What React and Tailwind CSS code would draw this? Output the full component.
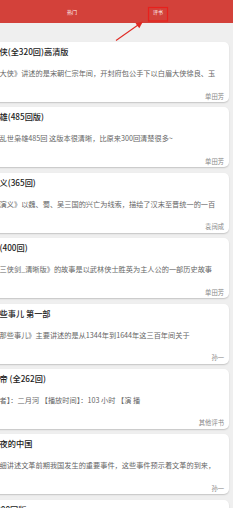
import React from "react";

const cards = [
  { title: "白眉大侠(全320回)高清版", desc: "《白眉大侠》讲述的是宋朝仁宗年间，开封府包公手下以白眉大侠徐良、玉", author: "单田芳" },
  { title: "乱世枭雄(485回版)", desc: "单田芳乱世枭雄485回 这版本很清晰，比原来300回清楚很多~", author: "单田芳" },
  { title: "三国演义(365回)", desc: "《三国演义》以魏、蜀、吴三国的兴亡为线索，描绘了汉末至晋统一的一百", author: "袁阔成" },
  { title: "三侠剑(400回)", desc: "评书《三侠剑_清晰版》的故事是以武林侠士胜英为主人公的一部历史故事", author: "单田芳" },
  { title: "明朝那些事儿 第一部", desc: "《明朝那些事儿》主要讲述的是从1344年到1644年这三百年间关于", author: "孙一" },
  { title: "雍正皇帝 (全262回)", desc: "【原作者】：二月河 【播放时间】：103  小时 【演 播", author: "其他评书" },
  { title: "文革前夜的中国", desc: "本书详细讲述文革前期我国发生的重要事件，这些事件预示着文革的到来，", author: "孙一" },
  { title: "隋唐1000回版", desc: "《隋唐演义》讲述的是隋末唐初的英雄故事", author: "单田芳" },
];

export default function App() {
  return (
    <div
      className="relative w-[245px] h-[508px] overflow-hidden bg-white"
      style={{ fontFamily: '"Noto Sans CJK SC", "Noto Sans", sans-serif' }}
    >
      <div className="w-[233px] h-full bg-[#efefef] overflow-hidden">
        <div className="h-[23px] bg-[#d3413a] flex items-center text-white text-[5px] leading-none">
          <span className="ml-[67px]">热门</span>
          <span className="ml-[76px]">评书</span>
        </div>
        <div className="pt-[19px] ml-[-28px] w-[257px] flex flex-col gap-[5.4px]">
          {cards.map((c, i) => (
            <div
              key={i}
              className="h-[60px] shrink-0 bg-white rounded-[5px] shadow-[0_1px_1.5px_rgba(0,0,0,0.18)] pl-[6px] pr-[5px] pt-[4px] flex flex-col"
            >
              <div className="ml-[-3px] text-[8.2px] leading-[11px] font-medium text-[#222] whitespace-nowrap overflow-hidden">
                {c.title}
              </div>
              <div className="mt-[11px] text-[7.2px] leading-[10px] text-[#666] whitespace-nowrap overflow-hidden">
                {c.desc}
              </div>
              <div className="mt-[13.5px] text-[6.3px] leading-[9px] text-[#888] text-right whitespace-nowrap">
                {c.author}
              </div>
            </div>
          ))}
        </div>
      </div>
      <svg className="absolute left-0 top-0" width="245" height="508" viewBox="0 0 245 508">
        <rect x="148.5" y="7.5" width="19" height="13.5" fill="none" stroke="#e8201c" strokeWidth="1.2" />
        <line x1="116" y1="40.5" x2="138" y2="25" stroke="#e02a24" strokeWidth="1.1" />
        <polygon points="143,21.5 135.5,23.2 139.3,28.2" fill="#e02a24" />
      </svg>
    </div>
  );
}
